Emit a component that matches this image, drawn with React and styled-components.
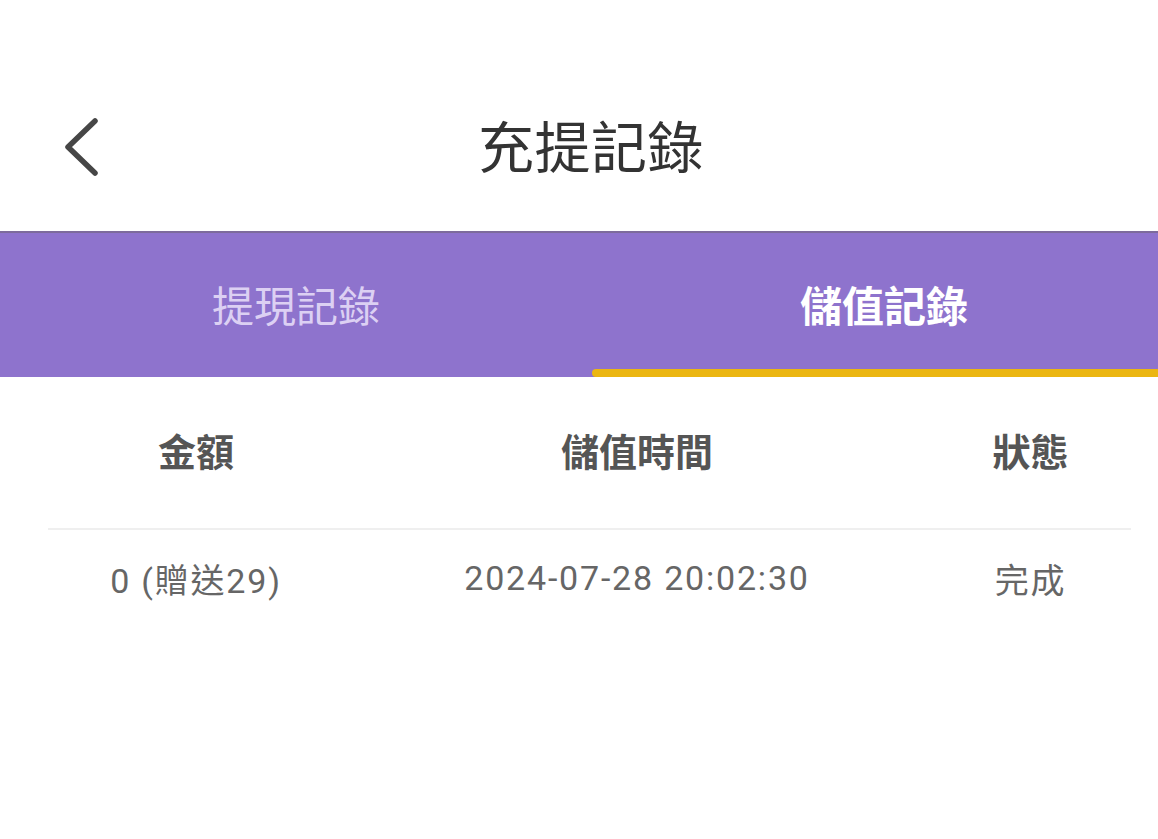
import React, { useState } from 'react';
import styled, { createGlobalStyle } from 'styled-components';

const GlobalStyle = createGlobalStyle`
  html, body {
    margin: 0;
    padding: 0;
    background: #ffffff;
  }
  body {
    font-family: Roboto, "Noto Sans CJK TC", "Noto Sans", sans-serif;
  }
`;

const records = [
  { amount: '0 (贈送29)', time: '2024-07-28 20:02:30', status: '完成' }
];

const App = () => {
  const [tab, setTab] = useState('deposit');

  return (
    <Page>
      <GlobalStyle />
      <Header>
        <BackButton aria-label="back">
          <svg width="40" height="62" viewBox="0 0 40 62" fill="none">
            <path
              d="M33 5 L6 31 L33 57"
              stroke="#464646"
              strokeWidth="5.5"
              strokeLinecap="round"
              strokeLinejoin="round"
            />
          </svg>
        </BackButton>
        <Title>充提記錄</Title>
      </Header>

      <Tabs>
        <Tab active={tab === 'withdraw'} onClick={() => setTab('withdraw')}>
          提現記錄
        </Tab>
        <Tab active={tab === 'deposit'} onClick={() => setTab('deposit')}>
          儲值記錄
        </Tab>
      </Tabs>

      <Table>
        <HeadRow>
          <HeadCell>金額</HeadCell>
          <HeadCell>儲值時間</HeadCell>
          <HeadCell>狀態</HeadCell>
        </HeadRow>
        {records.map((r) => (
          <Row key={r.time}>
            <Cell>{r.amount}</Cell>
            <Cell>{r.time}</Cell>
            <Cell>{r.status}</Cell>
          </Row>
        ))}
      </Table>
    </Page>
  );
};

const Page = styled.div`
  width: 1158px;
  min-height: 839px;
  background: #fff;
`;

const Header = styled.div`
  position: relative;
  height: 231px;
  display: flex;
  align-items: center;
  justify-content: center;
  padding: 56px 0 0 24px;
  box-sizing: border-box;
`;

const BackButton = styled.button`
  position: absolute;
  left: 62px;
  top: 116px;
  border: none;
  background: none;
  padding: 0;
  display: flex;
  cursor: pointer;
`;

const Title = styled.h1`
  margin: 0;
  font-family: "Noto Sans CJK TC", sans-serif;
  font-weight: 400;
  font-size: 56px;
  color: #333333;
  letter-spacing: 0.5px;
`;

const Tabs = styled.div`
  display: grid;
  grid-template-columns: 592px 1fr;
  height: 144px;
  background: #8e73cd;
  border-top: 2px solid #7d6b9c;
`;

const Tab = styled.div`
  position: relative;
  display: flex;
  align-items: center;
  justify-content: center;
  padding: 0 0 4px ${(p) => (p.active ? '18px' : '0')};
  font-family: "Noto Sans CJK TC", sans-serif;
  font-size: 42px;
  font-weight: ${(p) => (p.active ? 700 : 400)};
  color: ${(p) => (p.active ? '#ffffff' : '#dcd0f3')};
  cursor: pointer;

  &::after {
    content: '';
    display: ${(p) => (p.active ? 'block' : 'none')};
    position: absolute;
    left: 0;
    right: 0;
    bottom: 0;
    height: 8px;
    background: #ebb612;
    border-radius: 5px 0 0 5px;
  }
`;

const Table = styled.div`
  margin: 0 27px 0 48px;
`;

const HeadRow = styled.div`
  display: grid;
  grid-template-columns: 296px 586px 1fr;
  height: 151px;
  align-items: center;
  border-bottom: 2px solid #efefef;
`;

const HeadCell = styled.div`
  text-align: center;
  font-family: "Noto Sans CJK TC", sans-serif;
  font-size: 38px;
  font-weight: 700;
  color: #555555;
  padding-bottom: 6px;
`;

const Row = styled.div`
  display: grid;
  grid-template-columns: 296px 586px 1fr;
  height: 100px;
  align-items: center;
`;

const Cell = styled.div`
  text-align: center;
  font-family: Roboto, "Noto Sans CJK TC", sans-serif;
  font-size: 34px;
  letter-spacing: 1.8px;
  color: #666666;
  padding-bottom: 4px;
`;

export default App;
